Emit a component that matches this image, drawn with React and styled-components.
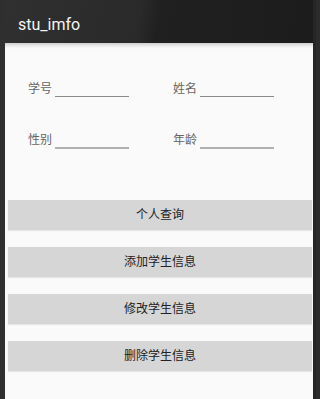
import React from "react";
import styled, { createGlobalStyle } from "styled-components";

const Global = createGlobalStyle`
  html, body { margin: 0; padding: 0; background: #2c2c2c; }
  * { box-sizing: border-box; }
`;

const Frame = styled.div`
  width: 316px;
  height: 399px;
  background: #fafafa;
  border-left: 5px solid #2f2f2f;
  border-right: 3px solid #262626;
  display: flex;
  flex-direction: column;
  overflow: hidden;
  font-family: Roboto, "Noto Sans CJK SC", sans-serif;
`;

const Toolbar = styled.div`
  height: 43px;
  flex: none;
  margin-left: -5px;
  margin-right: -3px;
  padding: 5px 0 0 18px;
  display: flex;
  align-items: center;
  background: linear-gradient(100deg, #303030 0%, #2a2a2a 44%, #202020 50%, #1c1c1c 100%);
  box-shadow: 0 2px 4px rgba(0, 0, 0, 0.2);
  position: relative;
  z-index: 1;
`;

const Title = styled.span`
  color: #f4f4f4;
  font-size: 16px;
  font-family: Roboto, sans-serif;
`;

const Form = styled.div`
  padding: 38px 0 0 23px;
  display: grid;
  grid-template-columns: 145px 145px;
  row-gap: 34px;
`;

const Field = styled.div`
  display: flex;
  align-items: flex-end;
  height: 17px;
`;

const Label = styled.span`
  font-family: "Noto Sans CJK SC", sans-serif;
  font-size: 12px;
  line-height: 14px;
  color: #666;
  align-self: flex-start;
`;

const Line = styled.div`
  width: 74px;
  margin-left: 3px;
  margin-bottom: ${(p) => (p.$thick ? "0" : "1px")};
  border-bottom: ${(p) => (p.$thick ? "2px solid #b0b0b0" : "1px solid #8c8c8c")};
`;

const Buttons = styled.div`
  margin: 51px 1px 0 3px;
  display: flex;
  flex-direction: column;
  gap: 17px;
`;

const Button = styled.div`
  height: 30px;
  background: #d6d6d6;
  box-shadow: 0 1px 1px rgba(0, 0, 0, 0.08);
  display: flex;
  align-items: center;
  justify-content: center;
  font-family: "Noto Sans CJK SC", sans-serif;
  font-size: 12px;
  color: #222;
  padding-bottom: 3px;
`;

const fields = [
  ["学号", false],
  ["姓名", false],
  ["性别", true],
  ["年龄", true],
];

const actions = ["个人查询", "添加学生信息", "修改学生信息", "删除学生信息"];

export default function App() {
  return (
    <>
      <Global />
      <Frame>
        <Toolbar>
          <Title>stu_imfo</Title>
        </Toolbar>
        <Form>
          {fields.map(([label, thick]) => (
            <Field key={label}>
              <Label>{label}</Label>
              <Line $thick={thick} />
            </Field>
          ))}
        </Form>
        <Buttons>
          {actions.map((a) => (
            <Button key={a}>{a}</Button>
          ))}
        </Buttons>
      </Frame>
    </>
  );
}
